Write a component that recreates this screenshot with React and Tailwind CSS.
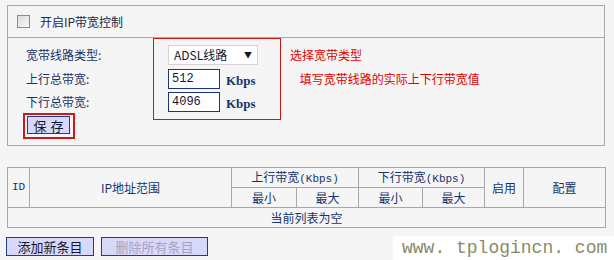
export default function App() {
  const cjk = "font-['Noto_Sans_CJK_SC',sans-serif]"
  const mono = "font-['Liberation_Mono','Noto_Sans_CJK_SC',monospace]"
  const serif = "font-['Liberation_Serif','Noto_Sans_CJK_SC',serif]"
  const cell = 'border border-[#a8a8a8] text-center font-normal p-0'

  return (
    <div className={`relative w-[614px] h-[260px] overflow-hidden bg-[#f5f5f5] pt-[5px] px-[7px] text-[12px] leading-none text-[#14346c] ${cjk}`}>
      <div className="w-[598px] h-[141px] border border-[#a8a8a8]">
        <div className="h-[32px] border-b border-[#a8a8a8] flex items-center pl-[9px]">
          <div className="w-[13px] h-[13px] border border-[#8c8c8c] bg-gradient-to-br from-[#dcdcdc] to-[#f8f8f8]" />
          <span className="ml-[10px] text-[#1a2a48]">开启IP带宽控制</span>
        </div>

        <div className="relative pt-[7px] pl-[18px]">
          <div className="flex items-center h-[20px]">
            <span className="w-[142px]">宽带线路类型:</span>
            <div className="w-[90px] h-[20px] bg-white border border-[#d4d4d4] flex items-center justify-between pl-[5px] pr-[5px] text-[#101830]">
              <span>ADSL线路</span>
              <span className="text-[8px]">▼</span>
            </div>
            <span className="ml-[32px] text-[#e00000]">选择宽带类型</span>
          </div>
          <div className="flex items-center h-[20px] mt-[4px]">
            <span className="w-[142px]">上行总带宽:</span>
            <div className={`w-[52px] h-[20px] bg-white border border-[#1c3478] flex items-center pl-[3px] text-[#101830] ${mono}`}>512</div>
            <span className={`ml-[6px] font-bold text-[13px] mt-[3px] ${serif}`}>Kbps</span>
            <span className="ml-[44px] text-[#e00000]">填写宽带线路的实际上下行带宽值</span>
          </div>
          <div className="flex items-center h-[20px] mt-[3px]">
            <span className="w-[142px]">下行总带宽:</span>
            <div className={`w-[52px] h-[20px] bg-white border border-[#1c3478] flex items-center pl-[3px] text-[#101830] ${mono}`}>4096</div>
            <span className={`ml-[6px] font-bold text-[13px] mt-[3px] ${serif}`}>Kbps</span>
          </div>
          <button className="mt-[4px] ml-[1px] w-[43px] h-[18px] bg-[#d8d8fa] border border-[#2a3888] text-[13px] text-[#101830] tracking-[4px] pl-[4px]">保存</button>

          <div className="absolute left-[145px] top-0 w-[128px] h-[82px] border border-[#d01818]" />
          <div className="absolute left-[15px] top-[75px] w-[52px] h-[26px] border-2 border-[#d01818]" />
        </div>
      </div>

      <table className="mt-[21px] w-[598px] border-collapse table-fixed">
        <colgroup>
          <col className="w-[22px]" />
          <col className="w-[202px]" />
          <col className="w-[65px]" />
          <col className="w-[62px]" />
          <col className="w-[64px]" />
          <col className="w-[62px]" />
          <col className="w-[39px]" />
          <col className="w-[82px]" />
        </colgroup>
        <thead>
          <tr className="h-[20px]">
            <th rowSpan={2} className={`${cell} ${mono} text-[11px]`}>ID</th>
            <th rowSpan={2} className={cell}>IP地址范围</th>
            <th colSpan={2} className={cell}>上行带宽<span className={`${mono} text-[11px]`}>(Kbps)</span></th>
            <th colSpan={2} className={cell}>下行带宽<span className={`${mono} text-[11px]`}>(Kbps)</span></th>
            <th rowSpan={2} className={cell}>启用</th>
            <th rowSpan={2} className={cell}>配置</th>
          </tr>
          <tr className="h-[20px]">
            <th className={cell}>最小</th>
            <th className={cell}>最大</th>
            <th className={cell}>最小</th>
            <th className={cell}>最大</th>
          </tr>
        </thead>
        <tbody>
          <tr className="h-[20px]">
            <td colSpan={8} className={cell}>当前列表为空</td>
          </tr>
        </tbody>
      </table>

      <div className="flex gap-[7px] mt-[9px] -ml-[1px]">
        <button className="w-[88px] h-[19px] bg-[#d8d8fa] border border-[#2a3888] text-[13px] text-[#101830]">添加新条目</button>
        <button className="w-[107px] h-[19px] bg-[#d8d8fa] border border-[#2a3888] text-[13px] text-[#a4a4c0]">删除所有条目</button>
      </div>

      <div className="absolute right-0 bottom-0 w-[221px] h-[24px] bg-white flex items-center pl-[9px]">
        <span className={`text-[18px] text-[#8a8a66] ${mono}`}>www. tplogincn. com</span>
      </div>
    </div>
  )
}
